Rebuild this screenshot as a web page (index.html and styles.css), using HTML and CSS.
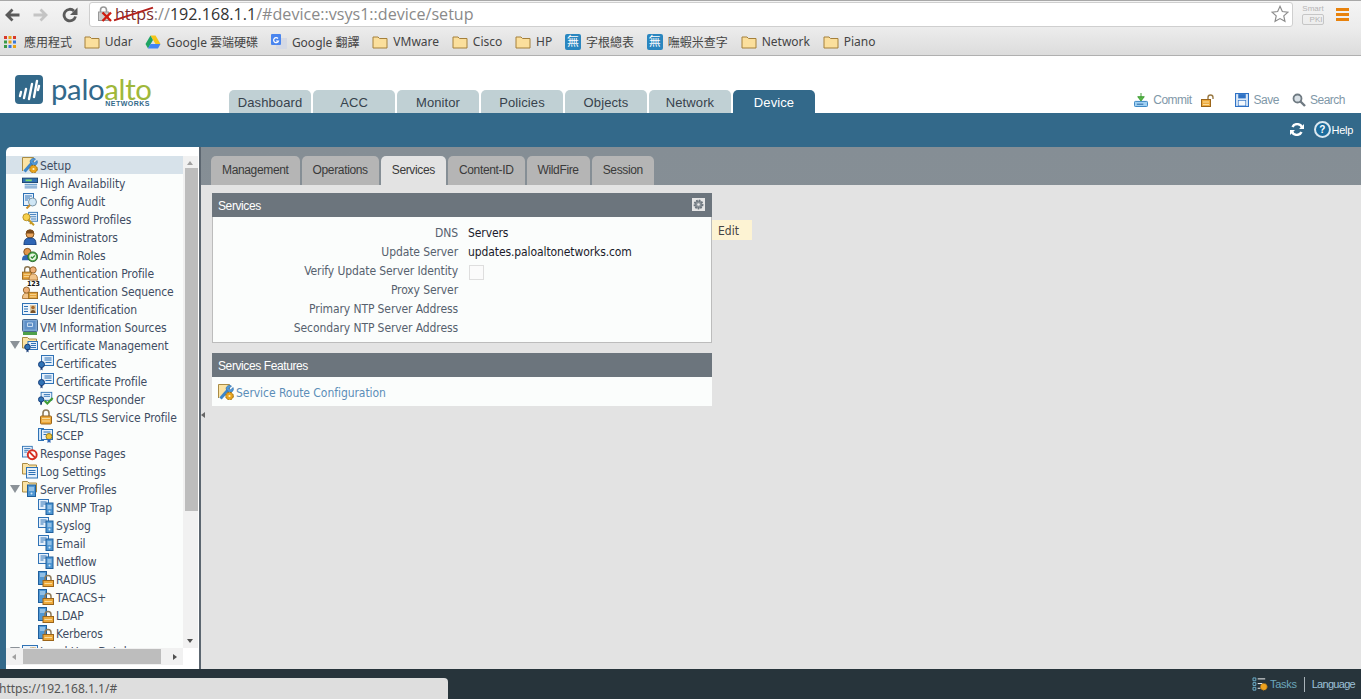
FILE: index.html
```html
<!DOCTYPE html>
<html lang="zh-Hant">
<head>
    <meta charset="UTF-8">
    <meta name="viewport" content="width=device-width, initial-scale=1.0">
    <title>Palo Alto Networks - Device Setup</title>
    <link rel="stylesheet" href="styles.css">
</head>
<body>
    <svg class="icon-defs" xmlns="http://www.w3.org/2000/svg">
        <symbol id="i-folder" viewBox="0 0 16 16">
            <path d="M1 14V3h5l1.500 1.500H15V14z" fill="#fbdf9c" stroke="#a5803a"/>
        </symbol>
        <symbol id="i-setup" viewBox="0 0 16 16">
            <path d="M.5 14V.5h11V5" fill="#fbe3a4" stroke="#a98b45"/>
            <path d="M2.500 14.500 10 6" stroke="#3d86c9" stroke-width="3.200"/>
            <path d="M8 5a3.500 3.500 0 0 1 5.500-3L11 4.500l1.500 1.500L15 3.500A3.500 3.500 0 0 1 11 8.500z" fill="#4f97d8" stroke="#2a6aa8" stroke-width=".6"/>
            <circle cx="11.500" cy="12" r="3.800" fill="#eaa51f" stroke="#9a6a10" stroke-dasharray="2 1"/>
            <circle cx="11.500" cy="12" r="1.100" fill="#fff2c4"/>
        </symbol>
        <symbol id="i-ha" viewBox="0 0 18 16">
            <rect x=".5" y="2.500" width="17" height="5" fill="#2f6fb3" stroke="#16406e"/>
            <rect x="4" y="4" width="7" height="2" fill="#7fdc6a"/>
            <path d="M3 9.500h14M3 11.500h14M3 13.500h14" stroke="#3f7fbf"/>
        </symbol>
        <symbol id="i-audit" viewBox="0 0 16 16">
            <rect x="1.500" y=".5" width="10" height="12" fill="#e5f0fb" stroke="#2f72b5"/>
            <path d="M3 3h7M3 5h5M3 7h3" stroke="#2f72b5"/>
            <circle cx="10.500" cy="9" r="4" fill="#cfe6f5" stroke="#7d97a8"/>
            <path d="M8 12 4.500 15.500" stroke="#c98e2a" stroke-width="2"/>
        </symbol>
        <symbol id="i-key" viewBox="0 0 18 16">
            <rect x="7.500" y=".5" width="10" height="10" fill="#e5f0fb" stroke="#2f72b5"/>
            <path d="M9 3h7M9 5.500h7M10 8h6" stroke="#2f72b5"/>
            <circle cx="5" cy="6" r="4" fill="#f6d04d" stroke="#b28a1b"/>
            <path d="m7 8.500 6.500 6.500M10.500 12 9 13.500" stroke="#c69a22" stroke-width="2.200"/>
        </symbol>
        <symbol id="i-admin" viewBox="0 0 16 16">
            <circle cx="8" cy="5" r="4" fill="#e9a45c" stroke="#8a5a20"/>
            <path d="M4 4.500a4 4 0 0 1 8 0z" fill="#7a4a1a"/>
            <path d="M2 16c0-6 2-7 6-7s6 1 6 7z" fill="#2f66b5" stroke="#173d78"/>
        </symbol>
        <symbol id="i-roles" viewBox="0 0 18 16">
            <circle cx="6" cy="4.500" r="4" fill="#e0964c" stroke="#7a4a1a"/>
            <path d="M0 14c0-5 2-6 6-6s5 1 5 6z" fill="#2f66b5"/>
            <circle cx="12" cy="10" r="5.500" fill="#4aa546" stroke="#26632b"/>
            <circle cx="12" cy="10" r="3.800" fill="#e7f4e3"/>
            <path d="m10 10 1.500 1.500 3-3" fill="none" stroke="#2c8a30" stroke-width="1.500"/>
        </symbol>
        <symbol id="i-authprof" viewBox="0 0 18 16">
            <path d="M3 7V4a3 3 0 0 1 6 0v3" fill="none" stroke="#8a7550" stroke-width="1.500"/>
            <rect x=".5" y="7" width="10" height="8" fill="#e5a33a" stroke="#96651a"/>
            <path d="M2 9.500h7M2 12h7" stroke="#f9dc9d"/>
            <circle cx="12.500" cy="4.500" r="3.500" fill="#eeb078" stroke="#8a5a20"/>
            <path d="M8 16c0-6 2-7 4.500-7s5 1 5 7z" fill="#f1c48a" stroke="#a56c2c"/>
        </symbol>
        <symbol id="i-authseq" viewBox="0 0 18 18">
            <circle cx="5" cy="8" r="3.500" fill="#eeb078" stroke="#8a5a20"/>
            <path d="M.5 17.500c0-5 2-6 4.500-6s4 1 4 6z" fill="#f1c48a" stroke="#a56c2c"/>
            <rect x="7.500" y="10.500" width="10" height="7" fill="#e5a33a" stroke="#96651a"/>
            <path d="M9 13h7M9 15.500h7" stroke="#f9dc9d"/>
        </symbol>
        <symbol id="i-userid" viewBox="0 0 16 16">
            <rect x=".5" y="2.500" width="15" height="11" fill="#eef5fb" stroke="#2f72b5"/>
            <path d="M2 5.500h4M2 8h4M2 10.500h4" stroke="#2f72b5"/>
            <rect x="8" y="4" width="6" height="8" fill="#d9c9a8"/>
            <circle cx="11" cy="6.500" r="1.800" fill="#a86a2c"/>
            <path d="M8.500 12c0-2 1-3 2.500-3s2.500 1 2.500 3z" fill="#7a5228"/>
        </symbol>
        <symbol id="i-vm" viewBox="0 0 16 16">
            <rect x=".5" y=".5" width="15" height="12" rx="1" fill="#7fa8d4" stroke="#47688c"/>
            <rect x="2.500" y="2" width="11" height="8.500" fill="#5f90c8"/>
            <path d="M5.500 4h5v3.500h-5z" fill="none" stroke="#c7dcf0"/>
            <rect x="1" y="13" width="14" height="3" fill="#4ea04a"/>
        </symbol>
        <symbol id="i-certfolder" viewBox="0 0 16 16">
            <path d="M.5 11V.5h5L7 2h7.500v9z" fill="#fbe3a4" stroke="#a98b45"/>
            <rect x="6" y="4.500" width="9.500" height="8" fill="#e5f0fb" stroke="#2f72b5"/>
            <path d="M9 6.500h5M9 8.500h5M9 10.500h5" stroke="#2f72b5"/>
            <circle cx="5.500" cy="10" r="2.800" fill="#2f72b5" stroke="#173d78"/>
            <path d="M4.500 12v3.500l1-1 1 1V12" fill="#173d78"/>
        </symbol>
        <symbol id="i-cert" viewBox="0 0 16 16">
            <rect x="3.500" y=".5" width="12" height="10" fill="#e5f0fb" stroke="#2f72b5"/>
            <path d="M6.500 3h7M6.500 5h7M7.500 7.500h6" stroke="#2f72b5"/>
            <circle cx="3.500" cy="9.500" r="3" fill="#2f72b5" stroke="#173d78"/>
            <path d="M2.500 12v3.500l1-1 1 1V12" fill="#173d78"/>
        </symbol>
        <symbol id="i-ocsp" viewBox="0 0 18 16">
            <rect x="3.500" y=".5" width="12" height="9" fill="#e5f0fb" stroke="#2f72b5"/>
            <path d="M6.500 3h7M6.500 5h7" stroke="#2f72b5"/>
            <circle cx="3.500" cy="8.500" r="3" fill="#2f72b5" stroke="#173d78"/>
            <path d="M2.500 11v4l1-1 1 1v-4" fill="#173d78"/>
            <path d="m7.500 10 3 3 6-6" fill="none" stroke="#3e9c34" stroke-width="2.400"/>
        </symbol>
        <symbol id="i-lock" viewBox="0 0 16 16">
            <path d="M5 7.500V4a3 3 0 0 1 6 0v3.500" fill="none" stroke="#8d7a5a" stroke-width="1.600"/>
            <rect x="2.500" y="7" width="11" height="8" rx="1" fill="#eda93b" stroke="#9b651a"/>
            <path d="M4 9.500h8M4 12h8" stroke="#f9dc9d"/>
        </symbol>
        <symbol id="i-scep" viewBox="0 0 16 16">
            <rect x=".5" y="1.500" width="5" height="12" fill="#cfe3f5" stroke="#2f72b5"/>
            <rect x="3.500" y="2.500" width="11" height="10" fill="#e5f0fb" stroke="#2f72b5"/>
            <path d="M5.500 5h7M5.500 7.500h3" stroke="#2f72b5"/>
            <circle cx="11" cy="9.500" r="3" fill="#f0c53a" stroke="#9b7d1a"/>
            <path d="M9.500 12v4l1.500-1 1.500 1v-4" fill="#2f66b5"/>
        </symbol>
        <symbol id="i-resp" viewBox="0 0 18 16">
            <rect x=".5" y=".5" width="11" height="12" fill="#e5f0fb" stroke="#2f72b5"/>
            <path d="M2.500 3h7M2.500 5h5M2.500 7h3" stroke="#2f72b5"/>
            <circle cx="11.500" cy="10" r="5" fill="#fff" stroke="#d62f22" stroke-width="2.200"/>
            <path d="m8 6.500 7 7" stroke="#d62f22" stroke-width="2.200"/>
        </symbol>
        <symbol id="i-log" viewBox="0 0 16 16">
            <path d="M.5 11V.5h5L7 2h7.500v9z" fill="#fbe3a4" stroke="#a98b45"/>
            <rect x="4.500" y="4.500" width="11" height="10.500" fill="#e5f0fb" stroke="#2f72b5"/>
            <path d="M6.500 7.500h7M6.500 9.500h7M6.500 11.500h7" stroke="#2f72b5"/>
        </symbol>
        <symbol id="i-srvfolder" viewBox="0 0 16 16">
            <path d="M.5 11V.5h5L7 2h7.500v9z" fill="#fbe3a4" stroke="#a98b45"/>
            <rect x="5.500" y="4" width="8" height="11.500" fill="#4f97d3" stroke="#1f5f9c"/>
            <path d="M7 7h5M7 9h5" stroke="#d5e8f7"/>
            <circle cx="9.500" cy="12.500" r="1" fill="#d5e8f7"/>
        </symbol>
        <symbol id="i-srvdoc" viewBox="0 0 16 16">
            <rect x=".5" y=".5" width="10" height="10" fill="#e5f0fb" stroke="#2f72b5"/>
            <path d="M2.500 3h6M2.500 5h6M2.500 7h3" stroke="#2f72b5"/>
            <rect x="8" y="4" width="7" height="11.500" fill="#4f97d3" stroke="#1f5f9c"/>
            <path d="M9.500 7h4M9.500 9h4" stroke="#d5e8f7"/>
            <circle cx="11.500" cy="12.500" r="1" fill="#d5e8f7"/>
        </symbol>
        <symbol id="i-srvlock" viewBox="0 0 16 16">
            <rect x=".5" y=".5" width="8" height="13" fill="#4f97d3" stroke="#1f5f9c"/>
            <path d="M2 3h5M2 5h5" stroke="#d5e8f7"/>
            <path d="M7 10V7.500a3 3 0 0 1 6 0V10" fill="none" stroke="#8d7a5a" stroke-width="1.500"/>
            <rect x="5" y="9.500" width="10.500" height="6" fill="#eda93b" stroke="#9b651a"/>
            <path d="M6.500 12.500h7.500" stroke="#f9dc9d"/>
        </symbol>
    </svg>

    <div class="browser-toolbar">
        <div class="nav-buttons">
            <svg class="nav-btn" viewBox="0 0 16 16"><path d="M15.500 8H4M8.500 2.500 3 8l5.500 5.500" fill="none" stroke="#5a5a5a" stroke-width="2.800"/></svg>
            <svg class="nav-btn" viewBox="0 0 16 16"><path d="M.5 8H12M7.500 2.500 13 8l-5.500 5.500" fill="none" stroke="#c4c4c4" stroke-width="2.800"/></svg>
            <svg class="nav-btn" viewBox="0 0 16 16"><path d="M13.500 9.500A5.800 5.800 0 1 1 12 4" fill="none" stroke="#5a5a5a" stroke-width="2.800"/><path d="M15.500 .5V8h-7.500z" fill="#5a5a5a"/></svg>
        </div>
        <div class="address-bar">
            <svg class="address-lock" viewBox="0 0 16 16">
                <path d="M3.500 7V4a3 3 0 0 1 6 0v3" fill="none" stroke="#999" stroke-width="1.600"/>
                <rect x="1.500" y="6" width="10" height="8.500" fill="#ccc" stroke="#999"/>
                <path d="m5.500 6.500 8.500 8.500M14 6.500 5.500 15" stroke="#d01c10" stroke-width="2.400"/>
            </svg>
            <span class="url-scheme">https</span><span class="url-grey">://</span><span class="url-host">192.168.1.1</span><span class="url-grey">/#device::vsys1::device/setup</span>
            <svg class="star" viewBox="0 0 20 20"><path d="m10 1.500 2.600 5.700 6.200.7-4.600 4.200 1.300 6.100-5.500-3.100-5.500 3.100 1.300-6.100L1.200 7.900l6.200-.7z" fill="#fff" stroke="#8c8c8c" stroke-width="1.300"/></svg>
        </div>
        <div class="smart-pki"><span>Smart</span><span class="pki-box">PKI</span></div>
        <div class="chrome-menu"><i></i><i></i><i></i></div>
    </div>

    <div class="bookmarks">
        <span class="bookmark apps">
            <svg viewBox="0 0 14 14" class="bm-icon">
                <path d="M1 1h3v3H1z" fill="#d93a2b"/><path d="M5.500 1h3v3h-3z" fill="#e8a317"/><path d="M10 1h3v3h-3z" fill="#d93a2b"/>
                <path d="M1 5.500h3v3H1z" fill="#3c9a48"/><path d="M5.500 5.500h3v3h-3z" fill="#e8a317"/><path d="M10 5.500h3v3h-3z" fill="#3a78d8"/>
                <path d="M1 10h3v3H1z" fill="#3c9a48"/><path d="M5.500 10h3v3h-3z" fill="#3a78d8"/><path d="M10 10h3v3h-3z" fill="#e8a317"/>
            </svg>應用程式</span>
        <span class="bookmark"><svg class="bm-icon"><use href="#i-folder"/></svg>Udar</span>
        <span class="bookmark">
            <svg viewBox="0 0 16 16" class="bm-icon"><path d="M5.500 1.500h5L15.500 10h-5z" fill="#f5c518"/><path d="M5.500 1.500 .5 10l2.500 4.500L8 6z" fill="#1fa463"/><path d="M3 14.500h10l2.500-4.500h-10z" fill="#4285f4"/></svg>Google 雲端硬碟</span>
        <span class="bookmark">
            <svg viewBox="0 0 16 16" class="bm-icon"><rect x="5" y="4" width="11" height="11" fill="#d5d9e4"/><rect width="10" height="11" rx="1" fill="#4a85ee"/><path d="M7 4.500a2.500 2.500 0 1 0 .5 2.500H5" fill="none" stroke="#fff" stroke-width="1.200"/></svg>Google 翻譯</span>
        <span class="bookmark"><svg class="bm-icon"><use href="#i-folder"/></svg>VMware</span>
        <span class="bookmark"><svg class="bm-icon"><use href="#i-folder"/></svg>Cisco</span>
        <span class="bookmark"><svg class="bm-icon"><use href="#i-folder"/></svg>HP</span>
        <span class="bookmark"><span class="bm-badge">無</span>字根總表</span>
        <span class="bookmark"><span class="bm-badge">無</span>嘸蝦米查字</span>
        <span class="bookmark"><svg class="bm-icon"><use href="#i-folder"/></svg>Network</span>
        <span class="bookmark"><svg class="bm-icon"><use href="#i-folder"/></svg>Piano</span>
    </div>

    <header class="app-header">
        <div class="logo">
            <svg class="logo-mark" viewBox="0 0 28 29">
                <rect width="28" height="29" rx="4" fill="#33698a"/>
                <path d="M5 21l1-4M9 23l2-9M14 24l3-15M19 22l3-16M23 15l1-4" stroke="#fff" stroke-width="2.400" stroke-linecap="round"/>
            </svg>
            <div class="logo-text">
                <div class="logo-name">palo<span class="logo-alto">alto</span></div>
                <div class="logo-sub">NETWORKS</div>
            </div>
        </div>
        <nav class="main-tabs">
            <a class="main-tab">Dashboard</a>
            <a class="main-tab">ACC</a>
            <a class="main-tab">Monitor</a>
            <a class="main-tab">Policies</a>
            <a class="main-tab">Objects</a>
            <a class="main-tab">Network</a>
            <a class="main-tab active">Device</a>
        </nav>
        <div class="header-actions">
            <span class="action commit">
                <svg class="action-icon" viewBox="0 0 15 15"><path d="M7.500 0v5M4 4h7L7.500 8.500z" stroke="#3a9a2e" fill="#58b947"/><rect x=".5" y="9" width="14" height="5.500" rx="1" fill="#9fd0f2" stroke="#2f7fc0"/><path d="M3 12h7" stroke="#1f5f9c"/></svg>
                Commit
            </span>
            <svg class="action-icon commit-lock" viewBox="0 0 13 13"><path d="M7 6V3.500a2.500 2.500 0 0 1 5 0V5" fill="none" stroke="#9a7a45" stroke-width="1.400"/><rect x=".5" y="5.500" width="9" height="7" fill="#eda93b" stroke="#9b651a"/><path d="M2 8h6M2 10.500h6" stroke="#f9dc9d"/></svg>
            <span class="action save">
                <svg class="action-icon" viewBox="0 0 13 13"><rect x=".5" y=".5" width="12" height="12" fill="#dbe9f8" stroke="#2f72c5"/><path d="M3 1v4h7V1z" fill="#2f72c5"/><rect x="3" y="7" width="7" height="5" fill="#f4f8fc" stroke="#2f72c5" stroke-width=".6"/></svg>
                Save
            </span>
            <span class="action search">
                <svg class="action-icon" viewBox="0 0 14 14"><circle cx="5.500" cy="5.500" r="4" fill="#d8e0e6" stroke="#6f7a82" stroke-width="1.800"/><path d="m8.500 8.500 4.500 4.500" stroke="#6f7a82" stroke-width="2.400"/></svg>
                Search
            </span>
        </div>
    </header>

    <div class="blue-bar">
        <svg class="refresh" viewBox="0 0 14 13"><path d="M12 4.500A5 4.500 0 0 0 2.500 4M2 8.500a5 4.500 0 0 0 9.500.5" fill="none" stroke="#fff" stroke-width="2.400"/><path d="M14 1v5H9zM0 12V7h5z" fill="#fff"/></svg>
        <span class="help-link"><span class="help-icon">?</span>Help</span>
    </div>

    <div class="workspace">
        <aside class="side-panel">
            <div class="tree-area">
                <ul class="tree">
                    <li class="tree-row selected"><svg class="tree-icon"><use href="#i-setup"/></svg>Setup</li>
                    <li class="tree-row"><svg class="tree-icon"><use href="#i-ha"/></svg>High Availability</li>
                    <li class="tree-row"><svg class="tree-icon"><use href="#i-audit"/></svg>Config Audit</li>
                    <li class="tree-row"><svg class="tree-icon"><use href="#i-key"/></svg>Password Profiles</li>
                    <li class="tree-row"><svg class="tree-icon"><use href="#i-admin"/></svg>Administrators</li>
                    <li class="tree-row"><svg class="tree-icon"><use href="#i-roles"/></svg>Admin Roles</li>
                    <li class="tree-row"><svg class="tree-icon"><use href="#i-authprof"/></svg>Authentication Profile</li>
                    <li class="tree-row"><svg class="tree-icon"><use href="#i-authseq"/></svg><span class="seq-num">123</span>Authentication Sequence</li>
                    <li class="tree-row"><svg class="tree-icon"><use href="#i-userid"/></svg>User Identification</li>
                    <li class="tree-row"><svg class="tree-icon"><use href="#i-vm"/></svg>VM Information Sources</li>
                    <li class="tree-row parent"><i class="twist"></i><svg class="tree-icon"><use href="#i-certfolder"/></svg>Certificate Management</li>
                    <li class="tree-row sub"><svg class="tree-icon"><use href="#i-cert"/></svg>Certificates</li>
                    <li class="tree-row sub"><svg class="tree-icon"><use href="#i-cert"/></svg>Certificate Profile</li>
                    <li class="tree-row sub"><svg class="tree-icon"><use href="#i-ocsp"/></svg>OCSP Responder</li>
                    <li class="tree-row sub"><svg class="tree-icon"><use href="#i-lock"/></svg>SSL/TLS Service Profile</li>
                    <li class="tree-row sub"><svg class="tree-icon"><use href="#i-scep"/></svg>SCEP</li>
                    <li class="tree-row"><svg class="tree-icon"><use href="#i-resp"/></svg>Response Pages</li>
                    <li class="tree-row"><svg class="tree-icon"><use href="#i-log"/></svg>Log Settings</li>
                    <li class="tree-row parent"><i class="twist"></i><svg class="tree-icon"><use href="#i-srvfolder"/></svg>Server Profiles</li>
                    <li class="tree-row sub"><svg class="tree-icon"><use href="#i-srvdoc"/></svg>SNMP Trap</li>
                    <li class="tree-row sub"><svg class="tree-icon"><use href="#i-srvdoc"/></svg>Syslog</li>
                    <li class="tree-row sub"><svg class="tree-icon"><use href="#i-srvdoc"/></svg>Email</li>
                    <li class="tree-row sub"><svg class="tree-icon"><use href="#i-srvdoc"/></svg>Netflow</li>
                    <li class="tree-row sub"><svg class="tree-icon"><use href="#i-srvlock"/></svg>RADIUS</li>
                    <li class="tree-row sub"><svg class="tree-icon"><use href="#i-srvlock"/></svg>TACACS+</li>
                    <li class="tree-row sub"><svg class="tree-icon"><use href="#i-srvlock"/></svg>LDAP</li>
                    <li class="tree-row sub"><svg class="tree-icon"><use href="#i-srvlock"/></svg>Kerberos</li>
                    <li class="tree-row parent"><i class="twist"></i><svg class="tree-icon"><use href="#i-userid"/></svg>Local User Database</li>
                </ul>
                <div class="v-scroll">
                    <i class="arrow up"></i>
                    <div class="v-track"><div class="v-thumb"></div></div>
                    <i class="arrow down"></i>
                </div>
            </div>
            <div class="h-scroll">
                <i class="arrow left"></i>
                <div class="h-track"><div class="h-thumb"></div></div>
                <i class="arrow right"></i>
            </div>
        </aside>

        <main class="content">
            <i class="collapse-handle"></i>
            <div class="sub-tabs">
                <a class="sub-tab">Management</a>
                <a class="sub-tab">Operations</a>
                <a class="sub-tab active">Services</a>
                <a class="sub-tab">Content-ID</a>
                <a class="sub-tab">WildFire</a>
                <a class="sub-tab">Session</a>
            </div>
            <div class="tab-body">
                <section class="box">
                    <div class="box-header">
                        Services
                        <span class="gear-btn"><svg viewBox="0 0 10 10"><circle cx="5" cy="5" r="3" fill="#8b9298" stroke="#6c757d" stroke-width="1.600" stroke-dasharray="1.200 .8"/><circle cx="5" cy="5" r="1" fill="#e8e8e8"/></svg></span>
                        <span class="edit-tip">Edit</span>
                    </div>
                    <div class="box-body">
                        <div class="field"><span class="field-label">DNS</span><span class="field-value">Servers</span></div>
                        <div class="field"><span class="field-label">Update Server</span><span class="field-value">updates.paloaltonetworks.com</span></div>
                        <div class="field"><span class="field-label">Verify Update Server Identity</span><span class="field-check"></span></div>
                        <div class="field"><span class="field-label">Proxy Server</span></div>
                        <div class="field"><span class="field-label">Primary NTP Server Address</span></div>
                        <div class="field"><span class="field-label">Secondary NTP Server Address</span></div>
                    </div>
                </section>
                <section class="box features">
                    <div class="box-header">Services Features</div>
                    <div class="feature-body">
                        <svg class="feature-icon"><use href="#i-setup"/></svg>
                        <a class="feature-link">Service Route Configuration</a>
                    </div>
                </section>
            </div>
        </main>
    </div>

    <footer class="app-footer">
        <span class="footer-tasks">
            <svg class="tasks-icon" viewBox="0 0 18 16">
                <path d="M1 1h3v3H1zM1 6h3v3H1zM1 11h3v3H1z" fill="none" stroke="#6fb3d0"/>
                <path d="M6 2h8M6 7h5M6 12h3" stroke="#fff"/>
                <circle cx="12.500" cy="10.500" r="3.500" fill="#eda21f" stroke="#b87a10" stroke-dasharray="1.500 1"/>
            </svg>
            Tasks
        </span>
        <span class="footer-lang">Language</span>
    </footer>

    <div class="status-bubble">https://192.168.1.1/#</div>
</body>
</html>
```

FILE: styles.css
```css
:root {
    --brand-blue: #33698a;
    --panel-head: #6c757d;
    --tree-text: #3f4d63;
    --ui-font: "DejaVu Sans Condensed", "DejaVu Sans", sans-serif;
    --tab-font: "Liberation Sans", sans-serif;
}

html, body {
    height: 699px;
    overflow: hidden;
}

body {
    margin: 0;
    display: flex;
    flex-direction: column;
    font-family: var(--ui-font);
    font-size: 12px;
    background-color: #fff;
}

.icon-defs {
    display: none;
}

/* browser chrome */
.browser-toolbar {
    height: 28px;
    box-sizing: border-box;
    display: flex;
    align-items: center;
    border-top: 1px solid #a8a8a8;
    background-image: linear-gradient(#f4f4f4, #ececec);
}

.nav-buttons {
    width: 89px;
    padding-left: 4px;
    box-sizing: border-box;
    display: flex;
    gap: 13px;
}

.nav-btn {
    width: 16px;
    height: 16px;
}

.address-bar {
    width: 1204px;
    height: 25px;
    box-sizing: border-box;
    display: flex;
    align-items: center;
    padding: 0 0 2px 7px;
    background-color: #fff;
    border: 1px solid #cfcfcf;
    border-radius: 3px;
    font-family: "Open Sans", sans-serif;
    font-size: 16.100px;
}

.address-lock {
    width: 16px;
    height: 16px;
    margin-right: 2px;
}

.url-scheme {
    color: #7d2a2a;
    position: relative;
}

/* chrome draws the broken-ssl strike as a slanted line */
.url-scheme::after {
    content: "";
    position: absolute;
    left: -2px;
    top: 50%;
    width: 41px;
    height: 2px;
    margin-top: -1px;
    background-color: #b3201c;
    transform: rotate(-18deg);
}

.url-grey {
    color: #8a8a8a;
}

.url-host {
    color: #333;
}

.star {
    width: 18px;
    height: 18px;
    margin-left: auto;
    margin-right: 3px;
}

.smart-pki {
    width: 40px;
    display: flex;
    flex-direction: column;
    align-items: center;
    font-family: var(--tab-font);
    font-size: 8px;
    line-height: 10px;
    color: #b5b5b5;
}

.pki-box {
    border: 1px solid #c6c6c6;
    border-radius: 2px;
    padding: 0 1px 0 7px;
    line-height: 9px;
}

.chrome-menu {
    display: flex;
    flex-direction: column;
    gap: 2px;
    margin-left: 3px;
}

.chrome-menu i {
    display: block;
    width: 13px;
    height: 3px;
    background-color: #e8820c;
}

.bookmarks {
    height: 28px;
    box-sizing: border-box;
    display: flex;
    align-items: center;
    padding-left: 3px;
    gap: 12.800px;
    background-image: linear-gradient(#ececec, #dcdcdc);
    border-bottom: 1px solid #b0b0b0;
    font-family: "Noto Sans", "Noto Sans CJK TC", sans-serif;
    color: #444;
}

.bookmark {
    display: flex;
    align-items: center;
    gap: 5px;
    white-space: nowrap;
}

.bm-icon {
    width: 16px;
    height: 16px;
}

.apps {
    gap: 3px;
    margin-right: -1px;
}

.apps .bm-icon {
    width: 14px;
    height: 14px;
    margin-right: 4px;
}

.bm-badge {
    width: 16px;
    height: 16px;
    border-radius: 2px;
    background-color: #2a86bf;
    color: #fff;
    font-size: 12px;
    line-height: 16px;
    text-align: center;
}

/* application header */
.app-header {
    height: 57px;
    flex-shrink: 0;
    display: flex;
    background-color: #fff;
}

.logo {
    width: 229px;
    box-sizing: border-box;
    padding: 19px 0 0 15px;
    display: flex;
    gap: 8px;
}

.logo-mark {
    width: 28px;
    height: 29px;
}

.logo-text {
    width: 99px;
}

.logo-name {
    font-family: "Lato", sans-serif;
    font-size: 29.300px;
    line-height: 23px;
    margin-top: 1.500px;
    letter-spacing: -.3px;
    white-space: nowrap;
    color: var(--brand-blue);
}

.logo-alto {
    color: #9fb83a;
}

.logo-sub {
    font-family: var(--tab-font);
    font-size: 7px;
    line-height: 7px;
    font-weight: 700;
    text-align: right;
    color: var(--brand-blue);
    letter-spacing: .5px;
}

.main-tabs {
    display: flex;
    gap: 2px;
    align-self: flex-end;
}

.main-tab {
    width: 82px;
    height: 23px;
    line-height: 26px;
    text-align: center;
    border-radius: 5px 5px 0 0;
    background-color: #c0d0d4;
    color: #37424c;
    font-family: var(--tab-font);
    font-size: 13px;
    letter-spacing: .1px;
}

.main-tab.active {
    background-color: var(--brand-blue);
    color: #fff;
}

.header-actions {
    margin-left: auto;
    padding: 36px 16px 0 0;
    display: flex;
    height: 16px;
    align-items: center;
    font-family: var(--tab-font);
    letter-spacing: -.5px;
    color: #7f98a8;
}

.action {
    display: flex;
    align-items: center;
    gap: 5px;
}

.action-icon {
    width: 14px;
    height: 14px;
    flex-shrink: 0;
}

.commit-lock {
    width: 13px;
    height: 13px;
    margin: 0 21px 0 9px;
}

.save {
    margin-right: 13px;
}

.search {
    gap: 4px;
}

.blue-bar {
    height: 34px;
    flex-shrink: 0;
    display: flex;
    align-items: center;
    justify-content: flex-end;
    padding: 0 8px 1px 0;
    box-sizing: border-box;
    background-color: var(--brand-blue);
    color: #fff;
}

.refresh {
    width: 14px;
    height: 13px;
    margin-right: 10px;
}

.help-link {
    display: flex;
    align-items: center;
    gap: 1px;
    font-family: var(--tab-font);
    font-size: 11px;
    letter-spacing: -.3px;
}

.help-icon {
    width: 13px;
    height: 13px;
    border: 2px solid #dbe8f0;
    border-radius: 50%;
    background-color: #1c6c9c;
    line-height: 13px;
    text-align: center;
    font-weight: 700;
    font-size: 10px;
}

/* side tree */
.workspace {
    flex: 1;
    min-height: 0;
    display: flex;
    background-color: var(--brand-blue);
}

.side-panel {
    width: 195px;
    margin-left: 6px;
    padding-top: 9px;
    padding-bottom: 4px;
    box-sizing: border-box;
    flex-shrink: 0;
    display: flex;
    flex-direction: column;
    background-color: #fff;
    border-right: 2px solid #5c6670;
    border-top-left-radius: 5px;
}

.tree-area {
    flex: 1;
    min-height: 0;
    display: flex;
}

.tree {
    width: 177px;
    margin: 0;
    padding: 0;
    list-style: none;
    overflow: hidden;
    background-color: #fbfdfc;
}

.tree-row {
    height: 18px;
    line-height: 20px;
    padding-left: 16px;
    display: flex;
    align-items: flex-start;
    position: relative;
    white-space: nowrap;
    letter-spacing: -.1px;
    color: var(--tree-text);
}

.tree-row.selected {
    background-color: #d7e2ea;
}

.tree-row.sub {
    padding-left: 32px;
}

.tree-icon {
    width: 16px;
    height: 16px;
    flex-shrink: 0;
    margin-right: 2px;
    margin-top: 1px;
}

.seq-num {
    position: absolute;
    left: 21px;
    top: -2px;
    font-size: 7px;
    line-height: 8px;
    font-weight: 700;
    color: #111;
}

.twist {
    position: absolute;
    left: 4px;
    top: 5px;
    width: 0;
    height: 0;
    border-left: 5px solid transparent;
    border-right: 5px solid transparent;
    border-top: 8px solid #8b9298;
}

.v-scroll {
    width: 15px;
    display: flex;
    flex-direction: column;
    background-color: #f1f1f1;
}

.v-track {
    flex: 1;
}

.v-thumb {
    height: 343px;
    margin-left: 2px;
    background-color: #bdbdbd;
}

.arrow {
    display: block;
    flex-shrink: 0;
    width: 0;
    height: 0;
    border-style: solid;
    border-color: transparent;
}

.arrow.up {
    margin: 5px 4px 3px;
    border-width: 0 3.500px 4px;
    border-bottom-color: #a0a0a0;
}

.arrow.down {
    margin: 3px 4px 5px;
    border-width: 4px 3.500px 0;
    border-top-color: #505050;
}

.h-scroll {
    height: 17px;
    width: 177px;
    display: flex;
    align-items: center;
    background-color: #f1f1f1;
}

.h-track {
    flex: 1;
    height: 15px;
}

.h-thumb {
    width: 138px;
    height: 15px;
    margin-left: 2px;
    background-color: #bdbdbd;
}

.arrow.left {
    margin: 0 5px 0 6px;
    border-width: 3.500px 4px 3.500px 0;
    border-right-color: #a0a0a0;
}

.arrow.right {
    margin: 0 6px 0 5px;
    border-width: 3.500px 0 3.500px 4px;
    border-left-color: #505050;
}

/* main content */
.content {
    flex: 1;
    min-width: 0;
    display: flex;
    flex-direction: column;
    position: relative;
    background-image: linear-gradient(#858e95, #8d9397);
}

.collapse-handle {
    position: absolute;
    left: 0;
    top: 265px;
    width: 0;
    height: 0;
    border-top: 3px solid transparent;
    border-bottom: 3px solid transparent;
    border-right: 4px solid #666;
}

.sub-tabs {
    height: 38px;
    box-sizing: border-box;
    padding: 9px 0 0 10px;
    display: flex;
    gap: 2px;
}

.sub-tab {
    height: 29px;
    box-sizing: border-box;
    padding: 0 11px;
    line-height: 29px;
    border-radius: 5px 5px 0 0;
    background-color: #b5b5b5;
    color: #3a3a3a;
    font-family: var(--tab-font);
    letter-spacing: -.35px;
}

.sub-tab.active {
    background-color: #e3e3e3;
}

.tab-body {
    flex: 1;
    padding: 8px 0 0 11px;
    background-color: #e3e3e3;
}

.box {
    width: 500px;
}

.box-header {
    height: 24px;
    line-height: 27px;
    padding-left: 6px;
    position: relative;
    background-color: var(--panel-head);
    color: #fff;
    font-family: var(--tab-font);
    letter-spacing: -.4px;
}

.gear-btn {
    position: absolute;
    right: 7px;
    top: 5px;
    width: 13px;
    height: 13px;
    display: flex;
    background-color: #e6e6e6;
}

.edit-tip {
    position: absolute;
    left: 500px;
    top: 27px;
    width: 40px;
    height: 20px;
    box-sizing: border-box;
    padding-left: 6px;
    line-height: 22px;
    background-color: #fdf3d3;
    color: #444;
    font-family: var(--ui-font);
    letter-spacing: 0;
}

.box-body {
    box-sizing: border-box;
    height: 126px;
    padding-top: 7px;
    background-color: #fbfdfc;
    border: 1px solid #bcbcbc;
    border-top: 0;
    letter-spacing: -.1px;
}

.field {
    height: 19px;
    display: flex;
    align-items: center;
    line-height: 19px;
}

.field-label {
    width: 245px;
    text-align: right;
    color: #56616e;
}

.field-value {
    margin-left: 10px;
    color: #1a1a2a;
}

.field-check {
    width: 13px;
    height: 13px;
    margin: 2px 0 0 11px;
    border: 1px solid #dedede;
    background-color: #fbfbfb;
}

.features {
    margin-top: 10px;
}

.feature-body {
    height: 29px;
    box-sizing: border-box;
    padding-left: 6px;
    display: flex;
    align-items: center;
    background-color: #fbfdfc;
}

.feature-icon {
    width: 16px;
    height: 16px;
    margin-right: 2px;
}

.feature-link {
    padding-top: 2px;
    letter-spacing: -.05px;
    color: #5b8db8;
}

/* footer */
.app-footer {
    height: 30px;
    flex-shrink: 0;
    box-sizing: border-box;
    padding-right: 6px;
    display: flex;
    justify-content: flex-end;
    align-items: center;
    background-color: #27343b;
    font-family: var(--tab-font);
    font-size: 11px;
}

.footer-tasks {
    display: flex;
    align-items: center;
    gap: 1px;
    padding-right: 7px;
    border-right: 1px solid #aab4ba;
    line-height: 13px;
    letter-spacing: -.3px;
    color: #6ca7bb;
}

.tasks-icon {
    width: 17px;
    height: 15px;
}

.footer-lang {
    padding-left: 7px;
    letter-spacing: -.7px;
    color: #9dc0d8;
}

.status-bubble {
    position: absolute;
    left: 0;
    top: 678px;
    width: 448px;
    height: 21px;
    box-sizing: border-box;
    line-height: 21px;
    text-indent: -1px;
    overflow: hidden;
    background-color: #dedede;
    border-top-right-radius: 4px;
    font-family: "Noto Sans", sans-serif;
    color: #555;
}
```
